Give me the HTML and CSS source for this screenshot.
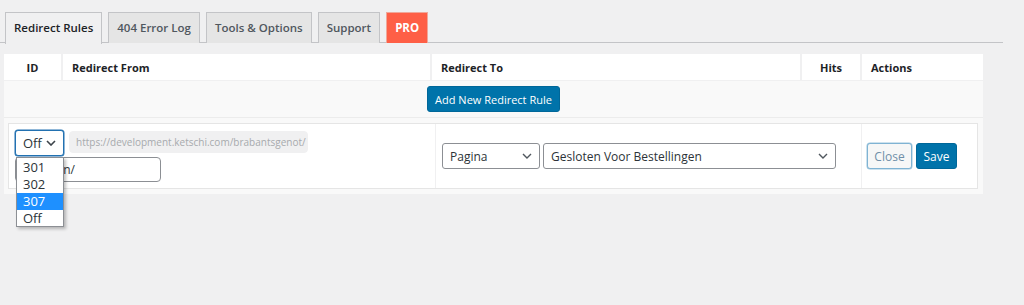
FILE: index.html
```html
<!DOCTYPE html>
<html>
<head>
<meta charset="utf-8">
<link rel="stylesheet" href="styles.css">
</head>
<body>
<div class="wrap">
  <nav class="tabs">
    <span class="tab active">Redirect Rules</span>
    <span class="tab">404 Error Log</span>
    <span class="tab">Tools &amp; Options</span>
    <span class="tab">Support</span>
    <span class="tab pro">PRO</span>
  </nav>
  <div class="table">
    <div class="thead">
      <div class="th center">ID</div>
      <div class="th">Redirect From</div>
      <div class="th">Redirect To</div>
      <div class="th center">Hits</div>
      <div class="th">Actions</div>
    </div>
    <div class="addrow">
      <span class="btn primary add">Add New Redirect Rule</span>
    </div>
    <div class="editrow">
      <div class="cell from">
        <div class="line">
          <div class="selwrap">
            <span class="select focus status">Off<svg class="chev" viewBox="0 0 10 6" width="10" height="6"><polyline points="1,1 5,5 9,1"/></svg></span>
            <div class="dropdown">
              <div class="opt">301</div>
              <div class="opt">302</div>
              <div class="opt hl">307</div>
              <div class="opt">Off</div>
            </div>
          </div>
          <span class="input disabled url">https://development.ketschi.com/brabantsgenot/</span>
        </div>
        <div class="slugline">
          <span class="input slug">gesloten/</span>
        </div>
      </div>
      <div class="cell to">
        <span class="select pagina">Pagina<svg class="chev" viewBox="0 0 10 6" width="10" height="6"><polyline points="1,1 5,5 9,1"/></svg></span>
        <span class="select page">Gesloten Voor Bestellingen<svg class="chev" viewBox="0 0 10 6" width="10" height="6"><polyline points="1,1 5,5 9,1"/></svg></span>
      </div>
      <div class="cell actions">
        <span class="btn close">Close</span>
        <span class="btn primary save">Save</span>
      </div>
    </div>
  </div>
</div>
</body>
</html>
```
FILE: styles.css
```css
* { box-sizing: border-box; }
html, body { min-height: 100%; }
body {
  margin: 0;
  min-height: 305px;
  background: #f0f0f1;
  font-family: "Open Sans", "Noto Sans", sans-serif;
  color: #1d2327;
  font-size: 12px;
}
.wrap {
  width: 1003px;
  min-height: 305px;
  padding-top: 12px;
}
.tabs {
  display: flex;
  gap: 6px;
  padding-left: 5px;
  border-bottom: 1px solid #c3c4c7;
  height: 31px;
}
.tab {
  display: flex;
  align-items: center;
  height: 31px;
  padding: 0 8px 1px;
  border: 1px solid #c3c4c7;
  border-bottom: none;
  background: #e5e5e5;
  color: #50575e;
  font-size: 11.5px;
  font-weight: 600;
}
.tab.active {
  background: #f0f0f1;
  color: #1d2327;
  position: relative;
  z-index: 1;
  margin-bottom: -1px;
  height: 32px;
  padding-bottom: 2px;
}
.tab.pro {
  background: #fe5f46;
  border-color: #f0a89a;
  color: #fff;
  font-weight: 700;
}
.table {
  margin: 11px 0 0 4px;
  width: 979px;
  background: #f9f9f9;
  padding-bottom: 5px;
}
.thead {
  display: grid;
  grid-template-columns: 57px 367px 368px 58px 121px;
  gap: 2px;
  background: #f0f0f1;
  padding-bottom: 1px;
}
.th {
  background: #fff;
  height: 26px;
  display: flex;
  align-items: center;
  padding-left: 9px;
  font-weight: 700;
  font-size: 11px;
}
.th.center { justify-content: center; padding-left: 0; }
.addrow {
  display: flex;
  justify-content: center;
  align-items: center;
  height: 37px;
  border-bottom: 1px solid #ececec;
}
.btn {
  display: inline-flex;
  align-items: center;
  justify-content: center;
  height: 26px;
  border-radius: 3px;
  font-size: 12px;
  border: 1px solid #006799;
}
.btn.primary {
  background: #0073aa;
  color: #fff;
}
.add { width: 133px; font-size: 11px; }
.editrow {
  margin: 5px 5px 0 4px;
  height: 66px;
  display: flex;
  background: #fff;
  border: 1px solid #e5e5e5;
}
.cell {
  border-right: 1px solid #f0f0f1;
}
.cell.from {
  width: 427px;
  padding: 6px 0 0 6px;
}
.line {
  display: flex;
  gap: 5px;
  align-items: flex-start;
  position: relative;
  z-index: 3;
}
.selwrap { position: relative; }
.select {
  display: flex;
  align-items: center;
  justify-content: space-between;
  height: 26px;
  border: 1px solid #8c8f94;
  border-radius: 3px;
  background: #fff;
  padding: 0 7px 0 7px;
  color: #2c3338;
  font-size: 12px;
}
.select.focus { border-color: #2271b1; box-shadow: 0 0 0 0.5px #2271b1; }
.status { width: 49px; font-size: 13px; }
.chev {
  fill: none;
  stroke: #50575e;
  stroke-width: 1.4;
}
.status .chev { stroke: #3c434a; stroke-width: 1.6; }
.dropdown {
  position: absolute;
  left: 1px;
  top: 27px;
  width: 48px;
  height: 70px;
  padding: 1px 0;
  background: #fff;
  border: 1px solid #8c8f94;
  box-shadow: 2px 2px 3px rgba(0, 0, 0, 0.25);
}
.opt {
  display: block;
  height: 17px;
  line-height: 17px;
  padding-left: 6px;
  font-size: 13px;
  color: #2c3338;
}
.opt.hl { background: #1e90ff; color: #fff; }
.input {
  display: flex;
  align-items: center;
  border: 1px solid #8c8f94;
  border-radius: 4px;
  background: #fff;
  padding: 0 7px;
  font-size: 11px;
  color: #2c3338;
}
.input.disabled {
  background: #f0f0f1;
  border-color: #f0f0f1;
  color: #a7aaad;
  height: 22px;
  width: 239px;
  margin-top: 1px;
  padding: 0 6px;
  font-size: 10px;
}
.slugline {
  display: flex;
  margin-top: 1px;
}
.input.slug {
  width: 146px;
  height: 25px;
  font-size: 12px;
}
.cell.to {
  width: 426px;
  display: flex;
  align-items: center;
  gap: 3px;
  padding-left: 6px;
}
.pagina { width: 98px; }
.page { width: 293px; }
.cell.actions {
  flex: 1;
  border-right: none;
  display: flex;
  align-items: center;
  gap: 4px;
  padding-left: 5px;
}
.btn.close {
  width: 45px;
  background: #f6f7f7;
  border: 1px solid #7fb3d3;
  box-shadow: 0 0 0 0.5px #9cc6de;
  color: #6f8fa8;
}
.save { width: 41px; }
```
